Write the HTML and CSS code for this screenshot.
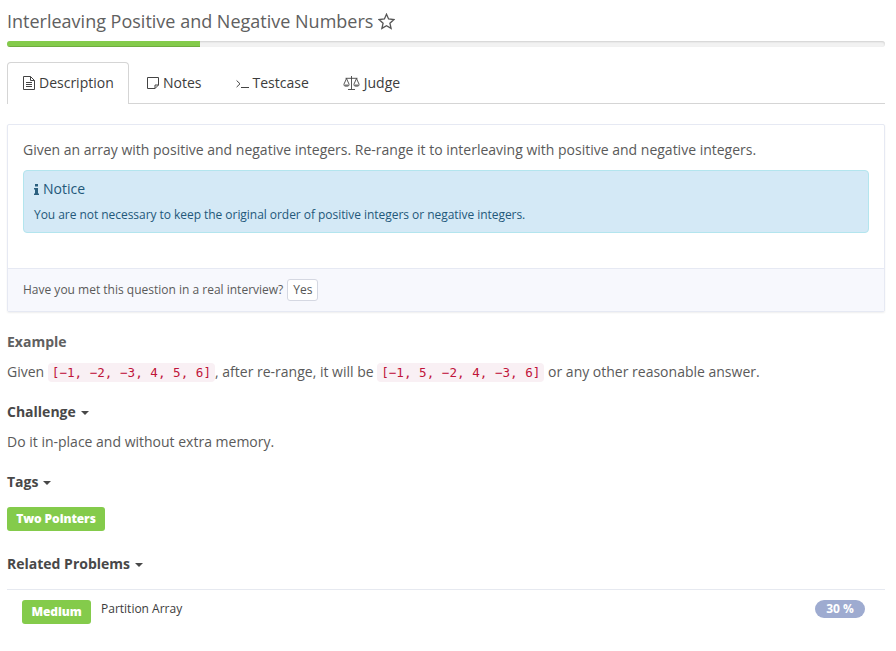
FILE: index.html
```html
<!DOCTYPE html>
<html lang="en">
<head>
<meta charset="utf-8">
<title>Interleaving Positive and Negative Numbers</title>
<link rel="stylesheet" href="styles.css">
</head>
<body>
<main class="page">
  <h1 class="title"><span>Interleaving Positive and Negative Numbers</span>
    <svg class="star" width="17" height="17" viewBox="0 0 17 17"><path d="M8.5 1.2 10.6 6l5.3.6-4 3.6 1.2 5.2-4.6-2.7-4.6 2.7 1.2-5.2-4-3.6L6.4 6z"/></svg>
  </h1>
  <div class="progress"><div class="progress-bar"></div></div>
  <nav class="tabs">
    <a class="tab active">
      <svg class="icon" width="12" height="14" viewBox="0 0 12 14"><path d="M.5.5h7l4 4v9H.5zM7.5.5v4h4M3 6.5h6M3 8.5h6M3 10.5h6"/></svg><span>Description</span></a>
    <a class="tab">
      <svg class="icon" width="12" height="12" viewBox="0 0 12 12"><path d="M.5.5h11v7.5L8 11.5H.5zM8 11.5V8h3.5"/></svg><span>Notes</span></a>
    <a class="tab">
      <svg class="icon prompt" width="13" height="10" viewBox="0 0 13 10"><path d="M.6 1.5 4 4.8.6 8.1M5 8.5h8"/></svg><span>Testcase</span></a>
    <a class="tab">
      <svg class="icon scale" width="17" height="14" viewBox="0 0 17 14"><path d="M8.5 0v13.3M5 13.5h7M2.5 2.3h12M3.5 2.5.8 8.5M3.5 2.5l2.7 6M13.5 2.5l-2.7 6M13.5 2.5l2.7 6"/><path class="pan" d="M.3 8.4h6.4C6.5 11.5.5 11.5.3 8.4zM10.3 8.4h6.4c-.2 3.1-6.2 3.1-6.4 0z"/></svg><span>Judge</span></a>
  </nav>
  <section class="panel">
    <div class="panel-body">
      <p>Given an array with positive and negative integers. Re-range it to interleaving with positive and negative integers.</p>
      <div class="notice">
        <h2><svg class="info" width="5" height="11" viewBox="0 0 5 11"><path d="M1 0h3v2.4H1zM0 4h4v5.4h1V11H0V9.4h1V5.5H0z"/></svg><span>Notice</span></h2>
        <p>You are not necessary to keep the original order of positive integers or negative integers.</p>
      </div>
    </div>
    <div class="panel-footer"><span>Have you met this question in a real interview?</span><button class="yes">Yes</button></div>
  </section>
  <h3 class="heading muted">Example</h3>
  <p class="text">Given <code>[−1, −2, −3, 4, 5, 6]</code>, after re-range, it will be <code>[−1, 5, −2, 4, −3, 6]</code> or any other reasonable answer.</p>
  <h3 class="heading">Challenge<i class="caret"></i></h3>
  <p class="text">Do it in-place and without extra memory.</p>
  <h3 class="heading">Tags<i class="caret"></i></h3>
  <div class="tags"><span class="label">Two Pointers</span></div>
  <h3 class="heading">Related Problems<i class="caret"></i></h3>
  <div class="related">
    <span class="label medium">Medium</span>
    <a class="problem">Partition Array</a>
    <span class="badge">30 %</span>
  </div>
</main>
</body>
</html>
```
FILE: styles.css
```css
* { box-sizing: border-box; }
body {
  margin: 0;
  background: #fff;
  color: #5a5a5a;
  font: 14px/20px "Open Sans", "Noto Sans", sans-serif;
}
h1, h2, h3, p { margin: 0; }
svg { flex: none; }
.page { width: 878px; margin-left: 7px; padding-top: 11px; }
.title {
  display: flex;
  align-items: center;
  gap: 5px;
  height: 20px;
  font-size: 18px;
  font-weight: 400;
  color: #606060;
}
.star { fill: none; stroke: #555; stroke-width: 1.3; }
.progress {
  height: 6px;
  margin-top: 10px;
  overflow: hidden;
  border-radius: 3px;
  background: #f2f2f2;
  box-shadow: inset 0 1px 2px rgba(0, 0, 0, .14);
}
.progress-bar {
  width: 193px;
  height: 6px;
  background: #84cb4b;
  box-shadow: inset 0 -1px 0 rgba(0, 0, 0, .15);
}
.tabs {
  display: flex;
  height: 42px;
  margin-top: 15px;
  border-bottom: 1px solid #d5d5d5;
}
.tab {
  display: flex;
  align-items: center;
  gap: 4px;
  height: 42px;
  padding: 0 16px 1px;
  border: 1px solid transparent;
  border-bottom: 0;
  color: #3c3c3c;
}
.tab.active {
  width: 122px;
  margin-right: 1px;
  padding: 0 15px 1px;
  border-color: #d5d5d5;
  border-radius: 4px 4px 0 0;
  background: #fff;
}
.icon { fill: none; stroke: #444; stroke-width: 1; }
.prompt { margin-top: 2px; }
.scale { stroke-width: .9; }
.pan { fill: #777; stroke: none; }
.panel {
  height: 188px;
  margin-top: 20px;
  border: 1px solid #e6e9f3;
  border-radius: 2px;
  box-shadow: 0 1px 2px rgba(0, 0, 0, .07);
}
.panel-body { height: 143px; padding: 15px; }
.notice {
  height: 63px;
  margin-top: 10px;
  padding: 8px 10px;
  border: 1px solid #b3e5ee;
  border-radius: 4px;
  background: #d4e9f6;
  color: #23587a;
}
.notice h2 {
  display: flex;
  align-items: center;
  gap: 4px;
  font-size: 14px;
  font-weight: 400;
  line-height: 20px;
}
.notice p {
  margin-top: 6px;
  font-size: 12px;
  line-height: 20px;
  letter-spacing: -.045px;
}
.info { fill: #2b607f; }
.panel-footer {
  display: flex;
  align-items: center;
  gap: 4px;
  height: 43px;
  padding: 0 15px;
  border-top: 1px solid #e6e9f3;
  background: #f7f8fd;
  font-size: 12px;
}
.yes {
  width: 31px;
  height: 22px;
  padding: 0;
  border: 1px solid #d5d8e2;
  border-radius: 3px;
  background: #fff;
  color: #555;
  font: 12px/18px "Open Sans", "Noto Sans", sans-serif;
}
.heading {
  display: flex;
  align-items: center;
  margin-top: 20px;
  font-size: 14px;
  font-weight: 700;
  line-height: 20px;
  color: #484848;
}
.heading.muted { color: #606060; }
.caret {
  margin: 2px 0 0 5px;
  border: 4px solid transparent;
  border-top-color: #484848;
  border-bottom: 0;
}
.text { margin-top: 10px; white-space: nowrap; }
code {
  padding: 2px 4px;
  border-radius: 4px;
  background: #f9f0f4;
  color: #c0143a;
  font: 12.6px/15px "DejaVu Sans Mono", monospace;
}
.tags { display: flex; margin-top: 15px; margin-bottom: 23px; }
.label {
  height: 24px;
  width: 98px;
  border-radius: 3px;
  background: #84cb4b;
  color: #fff;
  font-size: 12px;
  font-weight: 800;
  line-height: 24px;
  letter-spacing: -.1px;
  text-align: center;
}
.related {
  display: flex;
  align-items: flex-start;
  margin-top: 15px;
  padding: 10px 20px 0 15px;
  border-top: 1px solid #e6e9f0;
}
.medium { width: 69px; }
.problem { margin-left: 10px; font-size: 12px; line-height: 18px; color: #3c3c3c; }
.badge {
  width: 50px;
  height: 18px;
  margin-left: auto;
  border-radius: 9px;
  background: #9eabd0;
  color: #fff;
  font-size: 12px;
  font-weight: 700;
  line-height: 18px;
  text-align: center;
}
```
